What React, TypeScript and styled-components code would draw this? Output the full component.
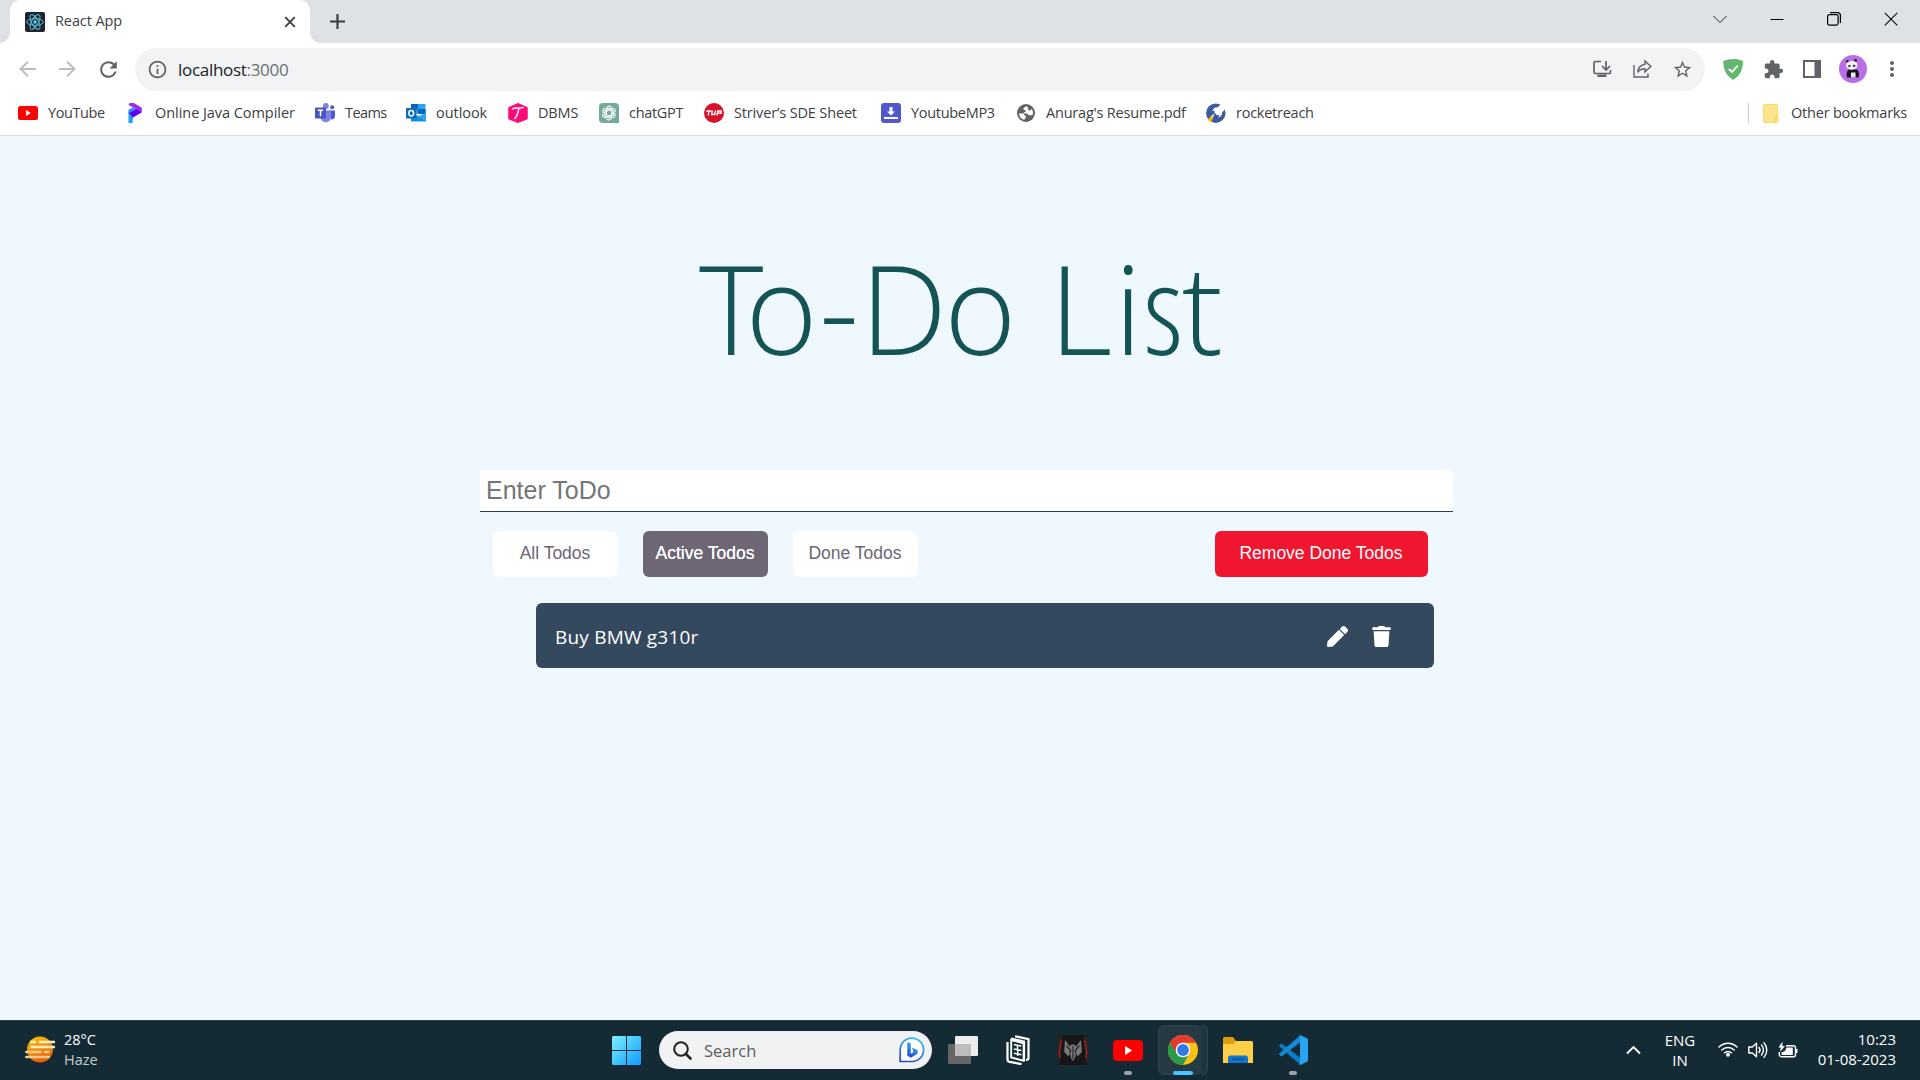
import React from "react";
import styled, { createGlobalStyle, css } from "styled-components";
import { FaPen, FaTrash } from "react-icons/fa";
import { MdExtension, MdInfoOutline, MdMoreVert, MdRefresh, MdStarBorder } from "react-icons/md";

const ui = `"Segoe UI", "Open Sans", "Noto Sans", sans-serif`;
const arial = `Arial, "Liberation Sans", sans-serif`;

const Global = createGlobalStyle`
  * { box-sizing: border-box; }
  html, body { margin: 0; padding: 0; overflow: hidden; }
  body { font-family: ${ui}; background: #eff7ff; }
  svg { display: block; flex: none; }
  button, input { font: inherit; border: 0; margin: 0; padding: 0; background: none; outline: none; }
`;

const Screen = styled.div`
  width: 1920px;
  height: 1080px;
  display: flex;
  flex-direction: column;
  overflow: hidden;
`;

/* ---------- browser chrome ---------- */

const TabStrip = styled.div`
  height: 43px;
  flex: none;
  display: flex;
  background: #dee1e6;
  padding-left: 10px;
`;

const Tab = styled.div`
  position: relative;
  width: 300px;
  height: 43px;
  display: flex;
  align-items: center;
  padding: 0 14px 0 15px;
  background: #fff;
  border-radius: 10px 10px 0 0;
  &::before, &::after {
    content: "";
    position: absolute;
    bottom: 0;
    width: 10px;
    height: 10px;
  }
  &::before { left: -10px; background: radial-gradient(circle at 0 0, #dee1e6 9.5px, #fff 10px); }
  &::after { right: -10px; background: radial-gradient(circle at 100% 0, #dee1e6 9.5px, #fff 10px); }
`;

const Label = styled.span<{ $size?: number; $ls?: number; $color?: string }>`
  font-size: ${p => p.$size ?? 14.5}px;
  letter-spacing: ${p => p.$ls ?? 0}px;
  color: ${p => p.$color ?? "#3c4043"};
  line-height: 20px;
  white-space: nowrap;
`;

const TabTitle = styled(Label)`
  flex: 1;
  margin: -1px 0 0 10px;
`;

const NewTab = styled.div`
  width: 55px;
  padding: 14px 0 0 20px;
`;

const WindowButtons = styled.div`
  margin-left: auto;
  display: flex;
  align-items: center;
  height: 37px;
  padding-right: 22px;
  gap: 43px;
`;

const Toolbar = styled.div`
  height: 52px;
  flex: none;
  display: flex;
  align-items: center;
  background: #fff;
  padding: 0 16px 0 18px;
`;

const NavButtons = styled.div`
  display: flex;
  align-items: center;
  gap: 19px;
  width: 117px;
`;

const Omnibox = styled.div`
  width: 1570px;
  height: 43px;
  border-radius: 22px;
  background: #f1f3f4;
  display: flex;
  align-items: center;
  padding: 0 12px 0 12px;
`;

const Url = styled.div`
  flex: 1;
  margin: 1px 0 0 10px;
  font-size: 17px;
  letter-spacing: -0.3px;
  line-height: 24px;
  color: #202124;
  span { color: #6b6f73; }
`;

const OmniIcons = styled.div`
  display: flex;
  align-items: center;
  gap: 20px;
`;

const Extensions = styled.div`
  flex: 1;
  display: flex;
  align-items: center;
  justify-content: flex-end;
  gap: 19.5px;
`;

const Avatar = styled.div`
  margin: 0 -6px 0 -2px;
`;

const BookmarkBar = styled.div`
  height: 41px;
  flex: none;
  display: flex;
  align-items: flex-start;
  background: #fff;
  padding: 8px 0 0 18px;
  border-bottom: 1px solid #d5dbe0;
`;

const Bookmark = styled.div<{ $w: number }>`
  width: ${p => p.$w}px;
  height: 20px;
  display: flex;
  align-items: center;
  gap: 10px;
`;

const OtherBookmarks = styled.div`
  margin-left: auto;
  display: flex;
  align-items: center;
  gap: 12px;
  height: 20px;
  padding: 0 13px 0 14px;
  border-left: 1px solid #c8cacd;
`;

/* ---------- to-do page ---------- */

const Page = styled.main`
  flex: 1;
  background: #eff7ff;
  display: flex;
  flex-direction: column;
`;

const Title = styled.h1`
  margin: 69px 0 0 2px;
  height: 265px;
  line-height: 206px;
  text-align: center;
  font-weight: 300;
  font-stretch: 94%;
  font-size: 123px;
  color: #145454;
`;

const Glyphs = styled.span<{ $stretch?: number; $ls?: number }>`
  font-stretch: ${p => p.$stretch ?? 94}%;
  letter-spacing: ${p => p.$ls ?? 0}px;
`;

const Board = styled.section`
  width: 973px;
  margin-left: 480px;
  display: flex;
  flex-direction: column;
`;

const TodoInput = styled.input`
  width: 100%;
  height: 42px;
  background: #fff;
  border-bottom: 1px solid #2c3e50;
  padding: 0 6px;
  font-family: ${arial};
  font-size: 25px;
  &::placeholder { color: #757575; opacity: 1; }
`;

const Filters = styled.div`
  display: flex;
  gap: 25px;
  margin: 19px 25px 0 13px;
`;

const FilterButton = styled.button<{ $kind?: "active" | "danger" }>`
  width: 125px;
  height: 46px;
  border-radius: 6px;
  background: #fff;
  color: #6c6675;
  font-family: ${arial};
  font-size: 17.5px;
  padding: 0 1px 1px 0;
  white-space: nowrap;
  ${p => p.$kind === "active" && css`
    background: #6c6675;
    color: #fff;
    text-shadow: 0 0 0.5px #fff;
  `}
  ${p => p.$kind === "danger" && css`
    width: 213px;
    margin-left: auto;
    background: #f01630;
    color: #fff;
  `}
`;

const TodoItem = styled.div`
  width: 898px;
  height: 65px;
  margin: 26px 0 0 56px;
  border-radius: 6px;
  background: #34495e;
  color: #fff;
  display: flex;
  align-items: center;
  padding: 2px 42px 0 19px;
  gap: 23px;
`;

const TodoText = styled.span`
  flex: 1;
  font-size: 19px;
  letter-spacing: 0.2px;
  line-height: 28px;
`;

/* ---------- taskbar ---------- */

const Taskbar = styled.footer`
  height: 60px;
  flex: none;
  background: #142b35;
  border-top: 1px solid #34474f;
  display: flex;
  align-items: center;
  padding-bottom: 1px;
  color: #fff;
`;

const Weather = styled.div`
  width: 612px;
  display: flex;
  align-items: center;
  gap: 9px;
  padding: 0 0 1px 25px;
`;

const Stack = styled.div<{ $align?: string }>`
  display: flex;
  flex-direction: column;
  align-items: ${p => p.$align ?? "flex-start"};
`;

const SearchPill = styled.div`
  width: 273px;
  height: 38px;
  margin: 0 3px 0 18px;
  border-radius: 19px;
  background: #f1f2f4;
  display: flex;
  align-items: center;
  padding: 0 7px 0 14px;
`;

const SearchLabel = styled(Label)`
  flex: 1;
  margin: 1px 0 0 12px;
`;

const AppSlot = styled.div`
  position: relative;
  width: 55px;
  height: 58px;
  display: flex;
  align-items: center;
  justify-content: center;
`;

const RunMark = styled.i<{ $active?: boolean }>`
  position: absolute;
  bottom: 4px;
  left: 50%;
  width: ${p => (p.$active ? 20 : 8)}px;
  height: 4px;
  transform: translateX(-50%);
  border-radius: 2px;
  background: ${p => (p.$active ? "#4cc2ff" : "#9aa3a8")};
`;

const Plate = styled.div`
  position: absolute;
  left: 3px;
  top: 4px;
  width: 44px;
  height: 50px;
  border-radius: 6px;
  background: #253a43;
  border: 1px solid #2f434c;
  & + & {
    left: 46px;
    width: 7px;
    border-left: 0;
    border-radius: 0 6px 6px 0;
    background: #1e343e;
  }
`;

const Front = styled.div`
  position: relative;
`;

const Tray = styled.div`
  margin-left: auto;
  display: flex;
  align-items: center;
  padding: 0 24px 1px 0;
`;

const Language = styled(Stack)`
  width: 75px;
  padding: 0 1px 0 0;
`;

const Status = styled.div`
  display: flex;
  gap: 10px;
`;

const Clock = styled(Stack)`
  width: 98px;
  padding-bottom: 2px;
`;

/* ---------- drawings ---------- */

const ReactIcon = () => (
  <svg width="20" height="20" viewBox="0 0 20 20">
    <rect width="20" height="20" rx="2" fill="#20232a" />
    <g fill="none" stroke="#53c1de" strokeWidth="1">
      {[0, 60, 120].map(a => <ellipse key={a} cx="10" cy="10" rx="8.3" ry="3.3" transform={`rotate(${a} 10 10)`} />)}
    </g>
    <circle cx="10" cy="10" r="1.7" fill="#61dafb" />
  </svg>
);

const Arrow = ({ flip }: { flip?: boolean }) => (
  <svg width="20" height="20" viewBox="0 0 20 20" fill="none" stroke="#bbbdc0" strokeWidth="1.9" transform={flip ? "scale(-1 1)" : undefined}>
    <path d="M18 10H3M10 2.7L2.5 10l7.5 7.3" />
  </svg>
);

const YouTube = ({ w, h }: { w: number; h: number }) => (
  <svg width={w} height={h} viewBox="0 0 30 20" preserveAspectRatio="none">
    <rect width="30" height="20" rx="4" fill="#f00" />
    <path d="M12 5.8v8.4l7.2-4.2z" fill="#fff" />
  </svg>
);

const Programiz = () => (
  <svg width="20" height="20" viewBox="0 0 20 20">
    <path d="M3.500 8.500L8 6v8.500L7.500 20h-4z" fill="#1aa3ff" />
    <path d="M3.500 9.500L11 5.500l5.500-.5v4.500L8 14.500z" fill="#6200ee" />
    <path d="M4.500 0h4.200L16.500 4.500v5L11.500 6.200 3.500 2z" fill="#9b2cf5" />
    <path d="M3.500 6.500L8 4.500l3.500 1.500-8 4.500z" fill="#3f8cf8" />
  </svg>
);

const Teams = () => (
  <svg width="20" height="20" viewBox="0 0 20 20">
    <circle cx="17.200" cy="4.300" r="2" fill="#5059c9" />
    <path d="M14 7.500h6v5.500c0 2.500-1.500 3.500-4 3.500z" fill="#5059c9" />
    <circle cx="10.800" cy="3" r="2.900" fill="#7b83eb" />
    <path d="M5.500 7.500H16v6.500a5 5 0 0 1-10.500 0z" fill="#7b83eb" />
    <rect y="4.500" width="11" height="11" rx="1" fill="#4b53bc" />
    <path d="M2.800 7.200h5.400M5.500 7.200v6" stroke="#fff" strokeWidth="1.500" />
  </svg>
);

const Outlook = () => (
  <svg width="20" height="20" viewBox="0 0 20 20">
    <rect x="5" y="1" width="14.500" height="9.500" fill="#28a8ea" />
    <path d="M5 1h7v5H5z" fill="#0a64b8" />
    <path d="M12 6h7.500v5H12z" fill="#0364b8" />
    <path d="M5 10l8 3.500 7-3.500v8.500H5z" fill="#1590e0" />
    <path d="M20 10v8.500L11 13z" fill="#35b8f1" opacity=".6" />
    <rect y="5" width="10.500" height="10.500" rx="1" fill="#0f6cbd" />
    <ellipse cx="5.200" cy="10.200" rx="2.400" ry="2.700" fill="none" stroke="#fff" strokeWidth="1.500" />
  </svg>
);

const Dbms = () => (
  <svg width="20" height="20" viewBox="0 0 20 20">
    <path d="M10 .5l9.200 4v11.500L10 19.500.8 16V4.500z" fill="#ff0a78" stroke="#ff0a78" strokeLinejoin="round" />
    <path d="M4.500 6c3-2.500 6 .5 11-1.600M11 5.200C10 9 9.500 13 6.800 15.500" stroke="#fff" strokeWidth="1.400" fill="none" strokeLinecap="round" />
  </svg>
);

const ChatGpt = () => (
  <svg width="20" height="20" viewBox="0 0 20 20">
    <path d="M4 0h12a4 4 0 0 1 4 4v16H4a4 4 0 0 1-4-4V4a4 4 0 0 1 4-4z" fill="#74aa9c" />
    <g fill="none" stroke="#fff" strokeWidth="1.050">
      {[0, 60, 120, 180, 240, 300].map(a => (
        <path key={a} d="M7.300 11.600V6a2.900 2.900 0 0 1 5.200-1.700M7.600 6.500l2.500-1.400 4 2.300" transform={`rotate(${a} 10 10)`} />
      ))}
    </g>
  </svg>
);

const Tuf = () => (
  <svg width="20" height="20" viewBox="0 0 20 20">
    <circle cx="10" cy="10" r="10" fill="#d5132b" />
    <path d="M2.300 8h5M5 8l-.8 4.500M8.300 7.500l-.6 4h3l.8-4M13 12.500l.8-4.500h3.500l-.3 2.200h-3" stroke="#fff" strokeWidth="1.400" fill="none" />
  </svg>
);

const Mp3 = () => (
  <svg width="20" height="20" viewBox="0 0 20 20">
    <rect width="20" height="20" rx="3" fill="#5158cf" />
    <path d="M8.500 4h3v4.500H14L10 12.600 6 8.500h2.500zM3 14h14v2H3z" fill="#fff" />
  </svg>
);

const Globe = () => (
  <svg width="20" height="20" viewBox="0 0 20 20">
    <circle cx="10" cy="10" r="9" fill="#5f6368" />
    <path d="M11 3.200c-1.500.3-3.700 1.400-3.700 2.600 0 1.400 2.500.9 2.500 2.200 0 1.500-2.300 1-2.500 2.500H3c.2 3.300 2.500 5.700 5.300 6.400 0-1.500 1.700-1.700 1.700-3.200 0-1.300-2-1-2.500-3.200h3.200c1.300 0 1.300 1.800 2.600 1.800h3.200c.8-2.400.4-4.300-.6-6-1.300-.1-1.200 1.500-2.700 1.200-1.400-.3-.7-2.800-2.200-4.300z" fill="#fff" />
  </svg>
);

const Rocket = () => (
  <svg width="20" height="20" viewBox="0 0 20 20">
    <circle cx="9.800" cy="10.200" r="9.700" fill="#3d5a9e" />
    <path d="M1.500 16.500l4.500-4 1.500 1.500-2.500 5.500z" fill="#fdb913" />
    <path d="M19.800.4c-3.500-.2-6.300 1-8 3.800l-3.300.6L6 8l2.800-.4-.6 1.800 2.800 2.800 2-.5-.4 3 3-2.500.8-3.300C19 7 20 4 19.800.4z" fill="#fff" />
    <path d="M8 11.500L5.500 14" stroke="#fff" strokeWidth="1.200" />
  </svg>
);

const NoteIcon = () => (
  <svg width="16" height="19" viewBox="0 0 16 19">
    <path d="M2 .5h11a1.500 1.500 0 0 1 1.500 1.500v11.500c1.500 1 1.300 5-1 5H2A1.500 1.500 0 0 1 .5 17V2A1.500 1.500 0 0 1 2 .5z" fill="#ffe48f" stroke="#fbd85f" />
    <path d="M12 18.200v-3.700c0-1.300 2.500-1.300 2.500-1" fill="none" stroke="#f4c93c" />
  </svg>
);

const line = { fill: "none", stroke: "#5f6368", strokeWidth: 1.7 };

const Install = () => (
  <svg width="20" height="20" viewBox="0 0 20 20" {...line}>
    <path d="M9 2.500H3.500a1.500 1.500 0 0 0-1.500 1.500v9a1.500 1.500 0 0 0 1.500 1.500h14a1 1 0 0 0 1-1V11M14 2v8M10 7l4 4 4-4" />
    <path d="M5.500 15.500h9v2.500h-9z" fill="#5f6368" stroke="none" />
  </svg>
);

const Share = () => (
  <svg width="20" height="20" viewBox="0 0 20 20" {...line} strokeWidth={1.400}>
    <path d="M2 6v12h14v-3.500M13 2l5.800 5.500-5.800 5.300V9.700c-3.500 0-5.500 1-7.300 3.600.5-4 2.800-7.400 7.300-8z" />
  </svg>
);

const Shield = () => (
  <svg width="20" height="21" viewBox="0 0 20 21">
    <path d="M10 0c3 0 6.500.8 9.700 2 .2 8-2.500 14.500-9.700 18.800C2.800 16.500.1 10 .3 2 3.500.8 7 0 10 0z" fill="#67b279" />
    <path d="M10 0c3 0 6.500.8 9.700 2 .2 8-2.500 14.500-9.700 18.800z" fill="#5fba68" />
    <path d="M5.800 9.800l3.200 3.200 5.700-6.300" stroke="#fff" strokeWidth="1.800" fill="none" />
  </svg>
);

const SidePanel = () => (
  <svg width="18" height="18" viewBox="0 0 18 18">
    <path d="M0 0h18v18H0zM2 2v14h9.500V2z" fill="#5f6368" fillRule="evenodd" />
  </svg>
);

const Panda = () => (
  <svg width="28" height="28" viewBox="0 0 28 28">
    <circle cx="14" cy="14" r="14" fill="#b76ee6" />
    <path d="M9.500 14.500h8.500c2 2 2.500 5 1.500 8H8c-1-3-.5-6 1.500-8z" fill="#1c1420" />
    <path d="M12 17.500h4.500v5H12z" fill="#eee" />
    <circle cx="8.500" cy="6.500" r="1.500" fill="#1c1420" />
    <circle cx="16.500" cy="5.500" r="1.500" fill="#1c1420" />
    <path d="M7.500 8c3-2.500 7-2.500 10-1 1.500 3 1 5-.5 6.500-3 1.500-6 1.500-8.500 0C7 12 6.700 10 7.500 8z" fill="#f4f0f5" />
    <path d="M9 10.500l2.500-.5v2H9.500zM14 9.700l2.600.3-.6 1.800h-2z" fill="#332a36" />
  </svg>
);

const Haze = () => (
  <svg width="30" height="28" viewBox="0 0 30 28">
    <defs><linearGradient id="sun" x1="0" y1="0" x2=".4" y2="1"><stop stopColor="#fbc60a" /><stop offset="1" stopColor="#ea5f0c" /></linearGradient></defs>
    <circle cx="15" cy="13.500" r="13" fill="url(#sun)" />
    <g strokeWidth="2.600" strokeLinecap="round">
      <path d="M6.500 6H10M15 6h14M6.500 11h22.500" stroke="#fff0c4" />
      <path d="M1.300 16h14M20 16h3.500M1.300 21h22.500" stroke="#e8cc8d" />
    </g>
  </svg>
);

const WindowsLogo = () => (
  <svg width="29" height="29" viewBox="0 0 29 29">
    <defs><linearGradient id="win" x1="0" y1="0" x2="1" y2="1"><stop stopColor="#80f0ff" /><stop offset="1" stopColor="#0a9bff" /></linearGradient></defs>
    <path d="M1 0h13v14H0V1zM15 0h13l1 1v13H15zM0 15h14v14H1l-1-1zM15 15h14v13l-1 1H15z" fill="url(#win)" />
  </svg>
);

const Magnifier = () => (
  <svg width="19" height="19" viewBox="0 0 19 19" fill="none" stroke="#222" strokeWidth="2">
    <circle cx="8" cy="8" r="6.800" /><path d="M12.800 12.800l4.700 4.700" strokeWidth="2.600" strokeLinecap="round" />
  </svg>
);

const Bing = () => (
  <svg width="26" height="26" viewBox="0 0 26 26">
    <defs><linearGradient id="bing" x1=".7" y1="0" x2=".3" y2="1"><stop stopColor="#35c1f0" /><stop offset="1" stopColor="#2348cf" /></linearGradient></defs>
    <path d="M1.200 24.500V13A11.700 11.700 0 1 1 13 24.500z" fill="#fff" stroke="url(#bing)" strokeWidth="1.700" />
    <path d="M8.300 5l3.500 1.200v10.500l2.700-1.500-1.500-4.500 5.500 2.300v3.700L12 20.700l-3.700-2z" fill="url(#bing)" />
  </svg>
);

const TaskView = () => (
  <svg width="30" height="28" viewBox="0 0 30 28">
    <rect x="0" y="8" width="23" height="20" rx="1" fill="#666" />
    <rect x="7" width="23" height="20" rx="1" fill="#ededed" />
    <path d="M7 8h16v12H7z" fill="#bdbdbd" />
  </svg>
);

const Cards = () => (
  <svg width="24" height="30" viewBox="0 0 24 30" fill="none" stroke="#fff" strokeWidth="2.200">
    <path d="M9 1.200l13.500 3V23c0 1.500-1 2-2.500 1.800M5 3.600l13 3v19.500M1.500 7v17.500c0 1.300.5 2 2 2.400l12 2.200" />
    <path d="M5.200 5l12.500 3.300v17.400L5.200 22.500z" strokeWidth="1.900" />
    <path d="M7.800 9.500l7.500 1.600M11.500 10.200v4.200M7.800 14l7.500 1.400M8 18.200l7.500 1.500M11.700 15.500V21" strokeWidth="1.500" />
  </svg>
);

const Predator = () => (
  <svg width="30" height="30" viewBox="0 0 30 30">
    <rect width="30" height="30" rx="2" fill="#171616" />
    <path d="M0 2l4-2v7L2.500 26 0 29zM30 2l-4-2v7l1.500 19 2.500 3z" fill="#2a2423" />
    <path d="M3.500 5L1.200 17l.8 6M26.500 5l2.300 12-.8 6" stroke="#c4151c" strokeWidth="1.200" fill="none" />
    <path d="M7 5l5 6.500 1.500-2h3l1.500 2L23 5l.8 12-4.300 4.500-1.500-3.500-1 5-2 3-2-3-1-5-1.500 3.500L6.200 17z" fill="#77797b" />
    <path d="M8.500 10.500l4.200 5-.7 2.500M21.500 10.500l-4.200 5 .7 2.500M15 11v13" stroke="#262627" strokeWidth="1.200" fill="none" />
  </svg>
);

const Chrome = () => (
  <svg width="30" height="30" viewBox="0 0 30 30">
    <circle cx="15" cy="15" r="15" fill="#fbc116" />
    <path d="M15 15L2 7.500A15 15 0 0 0 15 30l6-11z" fill="#2a9c48" />
    <path d="M15 7.800h13.150A15 15 0 0 0 2 7.500l6.500 11.200z" fill="#e33b2e" />
    <circle cx="15" cy="15" r="7.300" fill="#fff" />
    <circle cx="15" cy="15" r="5.900" fill="#3079ea" />
  </svg>
);

const Folder = () => (
  <svg width="30" height="26" viewBox="0 0 30 26">
    <path d="M0 1.500A1.500 1.500 0 0 1 1.500 0H10l3 4h14v8H0z" fill="#dd9d0a" />
    <path d="M0 7h10l3-3h15.500A1.500 1.500 0 0 1 30 5.500V26H0z" fill="#ffcf48" />
    <path d="M5 26v-5a2.500 2.500 0 0 1 2.500-2.500h15A2.500 2.500 0 0 1 25 21v5z" fill="#1076cc" />
    <path d="M9 22.300h12" stroke="#0b4f94" strokeWidth="1.300" />
  </svg>
);

const VsCode = () => (
  <svg width="30" height="30" viewBox="0 0 30 30">
    <path d="M.8 11l2-2c.5-.4 1-.4 1.500 0L22 22.500V29.600z" fill="#0a7cc9" />
    <path d="M.8 19l2 2c.5.400 1 .4 1.500 0L22 7.500V.4z" fill="#1489d6" />
    <path d="M21.800 0L29 3.200c.7.300 1 .8 1 1.500v20.600c0 .7-.3 1.200-1 1.500L21.800 30c-.9.200-1.400 0-1.800-.5 1 .5 2 0 2-1V1.500c0-1-1-1.500-2-1 .4-.5 1-.7 1.800-.5z" fill="#27a4f2" />
  </svg>
);

const Wifi = () => (
  <svg width="20" height="16" viewBox="0 0 20 16" fill="none" stroke="#fff" strokeWidth="1.500" strokeLinecap="round">
    <path d="M1 6a12.700 12.700 0 0 1 18 0M3.800 9a8.800 8.800 0 0 1 12.400 0M6.600 11.800a4.800 4.800 0 0 1 6.800 0" />
    <circle cx="10" cy="13.800" r="1.200" fill="#fff" />
  </svg>
);

const Volume = () => (
  <svg width="20" height="18" viewBox="0 0 20 18" fill="none" stroke="#fff" strokeWidth="1.400" strokeLinejoin="round" strokeLinecap="round">
    <path d="M.8 6h3.500L8.500 2.200v13.600L4.300 12H.8zM11 6.500a3.800 3.800 0 0 1 0 5M13.500 4a7.500 7.500 0 0 1 0 10M16 1.700a11 11 0 0 1 0 14.600" />
  </svg>
);

const Battery = () => (
  <svg width="20" height="18" viewBox="0 0 20 18">
    <path d="M8 4.700h7.500a2 2 0 0 1 2 2v7a2 2 0 0 1-2 2H3.300a2 2 0 0 1-2-2V11" fill="none" stroke="#fff" strokeWidth="1.400" />
    <path d="M18 8h1.500v4H18zM8.500 6.500h6.300v7.500H3.500v-2.500L7 10z" fill="#fff" />
    <path d="M4.500.5L.5 6.500h2.300L2 11l5-6H4.300z" fill="#fff" />
  </svg>
);

const bookmarks = [
  { name: "YouTube", w: 107, ls: -0.4, icon: <YouTube w={20} h={14} /> },
  { name: "Online Java Compiler", w: 190, ls: -0.05, icon: <Programiz /> },
  { name: "Teams", w: 91, ls: -0.6, icon: <Teams /> },
  { name: "outlook", w: 102, ls: -0.05, icon: <Outlook /> },
  { name: "DBMS", w: 91, ls: -0.15, icon: <Dbms /> },
  { name: "chatGPT", w: 105, ls: -0.3, icon: <ChatGpt /> },
  { name: "Striver’s SDE Sheet", w: 177, ls: -0.15, icon: <Tuf /> },
  { name: "YoutubeMP3", w: 135, ls: -0.3, icon: <Mp3 /> },
  { name: "Anurag's Resume.pdf", w: 190, ls: -0.2, icon: <Globe /> },
  { name: "rocketreach", w: 110, ls: -0.25, icon: <Rocket /> },
];

export default function App() {
  return (
    <Screen>
      <Global />
      <TabStrip>
        <Tab>
          <ReactIcon />
          <TabTitle $ls={-0.1}>React App</TabTitle>
          <svg width="12" height="12" viewBox="0 0 12 12" stroke="#3c4043" strokeWidth="1.900"><path d="M1.200 1.200l9.600 9.600M10.800 1.200l-9.600 9.600" /></svg>
        </Tab>
        <NewTab>
          <svg width="15" height="15" viewBox="0 0 15 15" stroke="#3c4043" strokeWidth="2.200"><path d="M0 7.500h15M7.500 0v15" /></svg>
        </NewTab>
        <WindowButtons>
          <svg width="14" height="14" viewBox="0 0 14 14" fill="none" stroke="#222"><path d="M.5 4L7 10.500 13.500 4" /></svg>
          <svg width="14" height="14" viewBox="0 0 14 14" stroke="#000"><path d="M.5 7.500h13" /></svg>
          <svg width="14" height="14" viewBox="0 0 14 14" fill="none" stroke="#000" strokeWidth="1.200"><rect x=".6" y="2.600" width="10.500" height="10.500" rx="1.800" /><path d="M3 .6h7.500a2.900 2.900 0 0 1 2.900 2.900V11" /></svg>
          <svg width="14" height="14" viewBox="0 0 14 14" stroke="#111" strokeWidth="1.200"><path d="M.8.800l12.500 12.500M13.300.800L.8 13.300" /></svg>
        </WindowButtons>
      </TabStrip>

      <Toolbar>
        <NavButtons>
          <Arrow />
          <Arrow flip />
          <MdRefresh size={25} color="#5f6368" />
        </NavButtons>
        <Omnibox>
          <MdInfoOutline size={21} color="#5f6368" />
          <Url>localhost<span>:3000</span></Url>
          <OmniIcons>
            <Install />
            <Share />
            <MdStarBorder size={21} color="#5f6368" />
          </OmniIcons>
        </Omnibox>
        <Extensions>
          <Shield />
          <MdExtension size={21} color="#5f6368" />
          <SidePanel />
          <Avatar><Panda /></Avatar>
          <MdMoreVert size={24} color="#5f6368" />
        </Extensions>
      </Toolbar>

      <BookmarkBar>
        {bookmarks.map(b => (
          <Bookmark key={b.name} $w={b.w}>
            {b.icon}
            <Label $ls={b.ls}>{b.name}</Label>
          </Bookmark>
        ))}
        <OtherBookmarks>
          <NoteIcon />
          <Label $ls={-0.2}>Other bookmarks</Label>
        </OtherBookmarks>
      </BookmarkBar>

      <Page>
        <Title>
          <Glyphs $stretch={91} $ls={-18}>T</Glyphs>
          <Glyphs $ls={1.5}>o-</Glyphs>
          <Glyphs $ls={-3}>D</Glyphs>
          <Glyphs $ls={0.5}>o </Glyphs>
          <Glyphs $stretch={90.5} $ls={2}>L</Glyphs>
          <Glyphs $ls={1}>i</Glyphs>
          <Glyphs $stretch={82} $ls={-1}>s</Glyphs>
          <Glyphs $stretch={92}>t</Glyphs>
        </Title>
        <Board>
          <TodoInput placeholder="Enter ToDo" />
          <Filters>
            <FilterButton>All Todos</FilterButton>
            <FilterButton $kind="active">Active Todos</FilterButton>
            <FilterButton>Done Todos</FilterButton>
            <FilterButton $kind="danger">Remove Done Todos</FilterButton>
          </Filters>
          <TodoItem>
            <TodoText>Buy BMW g310r</TodoText>
            <FaPen size={21} />
            <FaTrash size={21} />
          </TodoItem>
        </Board>
      </Page>

      <Taskbar>
        <Weather>
          <Haze />
          <Stack>
            <Label $color="#fff">28°C</Label>
            <Label $color="#c3cacd">Haze</Label>
          </Stack>
        </Weather>
        <WindowsLogo />
        <SearchPill>
          <Magnifier />
          <SearchLabel $size={16.5} $color="#5c5c5c">Search</SearchLabel>
          <Bing />
        </SearchPill>
        <AppSlot><TaskView /></AppSlot>
        <AppSlot><Cards /></AppSlot>
        <AppSlot><Predator /></AppSlot>
        <AppSlot><YouTube w={30} h={21} /><RunMark /></AppSlot>
        <AppSlot><Plate /><Plate /><Front><Chrome /></Front><RunMark $active /></AppSlot>
        <AppSlot><Folder /></AppSlot>
        <AppSlot><VsCode /><RunMark /></AppSlot>
        <Tray>
          <svg width="17" height="10" viewBox="0 0 17 10" fill="none" stroke="#fff" strokeWidth="1.900"><path d="M1 8.500L7.500 2 14 8.500" /></svg>
          <Language $align="center">
            <Label $size={15} $color="#fff">ENG</Label>
            <Label $size={15} $color="#fff">IN</Label>
          </Language>
          <Status><Wifi /><Volume /><Battery /></Status>
          <Clock $align="flex-end">
            <Label $size={15} $color="#fff">10:23</Label>
            <Label $size={15} $color="#fff">01-08-2023</Label>
          </Clock>
        </Tray>
      </Taskbar>
    </Screen>
  );
}
